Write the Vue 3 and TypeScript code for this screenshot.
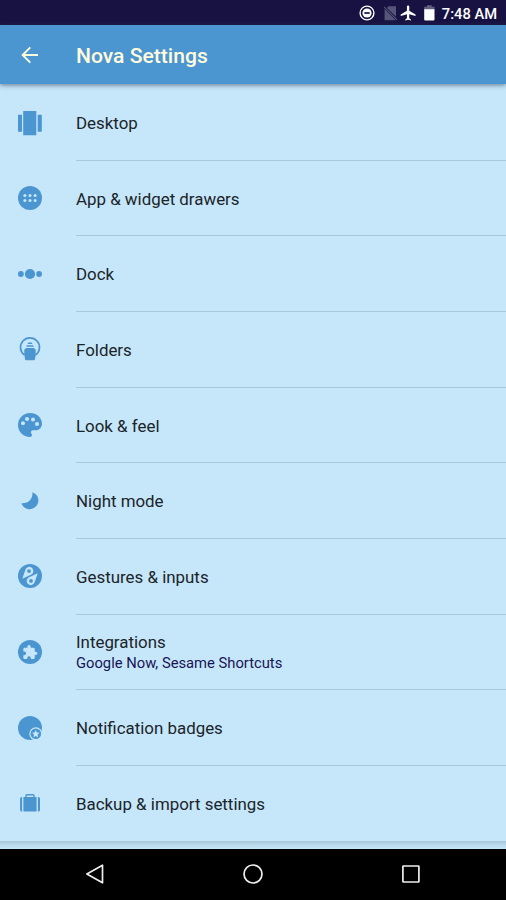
<script setup lang="ts">
type IconName =
  | 'desktop' | 'drawer' | 'dock' | 'folder' | 'palette'
  | 'moon' | 'gesture' | 'puzzle' | 'badge' | 'backup'

interface SettingItem {
  icon: IconName
  title: string
  summary?: string
}

const items: SettingItem[] = [
  { icon: 'desktop', title: 'Desktop' },
  { icon: 'drawer', title: 'App & widget drawers' },
  { icon: 'dock', title: 'Dock' },
  { icon: 'folder', title: 'Folders' },
  { icon: 'palette', title: 'Look & feel' },
  { icon: 'moon', title: 'Night mode' },
  { icon: 'gesture', title: 'Gestures & inputs' },
  { icon: 'puzzle', title: 'Integrations', summary: 'Google Now, Sesame Shortcuts' },
  { icon: 'badge', title: 'Notification badges' },
  { icon: 'backup', title: 'Backup & import settings' },
]
</script>

<template>
  <div class="screen">
    <div class="status">
      <svg class="status-icons" viewBox="0 0 80 26">
        <circle cx="8" cy="13" r="6.900" fill="none" stroke="#fff" stroke-width="1.400" />
        <circle cx="8" cy="13" r="4.600" fill="#fff" />
        <path d="M5.300 13H10.700" stroke="#181243" stroke-width="1.700" />
        <path d="M37 6.300V16.800L28 7.900L29.600 6.300ZM25.600 9L36.800 20.200H25.600Z" fill="#57547a" />
        <path d="M25 6.800L38 19.800" stroke="#57547a" stroke-width="1.100" />
        <path transform="translate(40.200 3.900) scale(.76)" fill="#fff" d="M21.500 16v-2l-8.300-5V3.500a1.500 1.500 0 0 0-3 0V9L2 14v2l8.200-2.500V19L8 20.500V22l3.700-1 3.700 1v-1.500L13.200 19v-5.500Z" />
        <path d="M65.200 6.800H68V5.300H72.700V6.800H75.500V10H65.200Z" fill="#625f81" />
        <path d="M65.200 9.200H75.500V19.600Q75.500 20.500 74.600 20.500H66.100Q65.200 20.500 65.200 19.600Z" fill="#fff" />
      </svg>
      <span class="clock">7:48 AM</span>
    </div>

    <header class="bar">
      <svg class="back" viewBox="0 0 18 18">
        <path d="M17 9H2M9.300 1.300L1.600 9L9.300 16.700" fill="none" stroke="#fffbdc" stroke-width="1.900" />
      </svg>
      <h1 class="heading">Nova Settings</h1>
    </header>

    <main class="list">
      <div v-for="item in items" :key="item.icon" class="row">
        <svg class="icon" viewBox="0 0 24 24">
          <g v-if="item.icon === 'desktop'">
            <path d="M5.200 0H18.300V24.300H5.200ZM0 3.800H4V20.700H0ZM19.700 3.800H23.800V20.700H19.700Z" />
          </g>
          <g v-else-if="item.icon === 'drawer'">
            <circle cx="12" cy="12" r="12" />
            <g class="cut">
              <circle cx="6.900" cy="9.400" r="1.500" /><circle cx="12" cy="9.400" r="1.500" /><circle cx="17.100" cy="9.400" r="1.500" />
              <circle cx="6.900" cy="14.600" r="1.500" /><circle cx="12" cy="14.600" r="1.500" /><circle cx="17.100" cy="14.600" r="1.500" />
            </g>
          </g>
          <g v-else-if="item.icon === 'dock'">
            <circle cx="2.900" cy="12" r="2.900" /><circle cx="12" cy="12" r="5.100" /><circle cx="21.100" cy="12" r="2.900" />
          </g>
          <g v-else-if="item.icon === 'folder'">
            <path class="ring" d="M6.500 18.100A9.500 9.500 0 1 1 17.500 18.100" />
            <path d="M10.300 5.500H13.700L14.500 6.900H9.500ZM8.900 8.300H15.100L15.900 9.800H8.100ZM7.700 11H16.300L16.700 12.200H17.700V17.500L17 22.300Q16.800 23.300 15.800 23.300H8.200Q7.200 23.300 7 22.300L6.300 17.500V12.200H7.300Z" />
          </g>
          <g v-else-if="item.icon === 'palette'">
            <path transform="translate(-4 -4) scale(1.333)" d="M12 3c-4.970 0-9 4.030-9 9s4.030 9 9 9c.83 0 1.500-.67 1.500-1.500 0-.39-.15-.74-.39-1.010-.23-.26-.38-.61-.38-.99 0-.83.67-1.500 1.500-1.500H16c2.760 0 5-2.240 5-5 0-4.420-4.030-8-9-8Z" />
            <g class="cut">
              <circle cx="5" cy="10.200" r="2" /><circle cx="9" cy="6" r="2" /><circle cx="15" cy="6.400" r="2" /><circle cx="19" cy="10.900" r="2" />
            </g>
          </g>
          <g v-else-if="item.icon === 'moon'">
            <path d="M14.300 3.200A8.700 8.700 0 1 1 3.400 14.200A9.600 9.600 0 0 0 14.300 3.200Z" />
          </g>
          <g v-else-if="item.icon === 'gesture'">
            <circle cx="12" cy="12" r="12" />
            <g class="cut">
              <path fill-rule="evenodd" d="M4.300 14.700L7.300 6A4.100 4.100 0 1 1 13.400 10.500ZM11 5.200A1.900 1.900 0 1 0 11 9A1.900 1.900 0 1 0 11 5.200Z" />
              <path fill-rule="evenodd" d="M19.700 9.300L16.700 18A4.100 4.100 0 1 1 10.600 13.500ZM13 15A1.900 1.900 0 1 0 13 18.800A1.900 1.900 0 1 0 13 15Z" />
            </g>
          </g>
          <g v-else-if="item.icon === 'puzzle'">
            <circle cx="12" cy="12" r="12" />
            <path class="cut" transform="translate(4 4.300) scale(.67)" d="M20.500 11H19V7c0-1.100-.9-2-2-2h-4V3.500a2.500 2.500 0 0 0-5 0V5H4c-1.100 0-2 .9-2 2v3.800h1.500a2.700 2.700 0 0 1 0 5.400H2V20c0 1.100.9 2 2 2h3.800v-1.500a2.700 2.700 0 0 1 5.400 0V22H17c1.100 0 2-.9 2-2v-4h1.500a2.500 2.500 0 0 0 0-5Z" />
          </g>
          <g v-else-if="item.icon === 'badge'">
            <circle cx="12" cy="12" r="12" />
            <circle class="cut" cx="17.800" cy="17.800" r="6.500" />
            <circle cx="17.800" cy="17.800" r="5.300" />
            <path class="cut" d="M17.800 14.100L18.900 16.500L21.500 16.800L19.600 18.600L20.100 21.200L17.800 19.900L15.500 21.200L16 18.600L14.100 16.800L16.700 16.500Z" />
          </g>
          <g v-else>
            <path fill-rule="evenodd" d="M5.400 6H7.300V4.700Q7.300 3.100 8.900 3.100H15.100Q16.700 3.100 16.700 4.700V6H18.600V20.500H5.400ZM8.700 6H15.300V4.500H8.700Z" />
            <path d="M4.100 6V20.500H3.600Q2.100 20.500 2.100 18.900V7.600Q2.100 6 3.600 6ZM19.900 6H20.500Q22 6 22 7.600V18.900Q22 20.500 20.500 20.500H19.900Z" />
          </g>
        </svg>
        <div class="label">
          <span class="title">{{ item.title }}</span>
          <span v-if="item.summary" class="summary">{{ item.summary }}</span>
        </div>
      </div>
    </main>
    <div class="edge"></div>

    <nav class="nav">
      <svg viewBox="0 0 22 22"><path d="M2.900 11L18.500 2.200V19.800Z" /></svg>
      <svg viewBox="0 0 22 22"><circle cx="11" cy="11" r="9" /></svg>
      <svg viewBox="0 0 22 22"><rect x="2.900" y="3" width="16" height="16" rx=".5" /></svg>
    </nav>
  </div>
</template>

<style>
body {
  margin: 0;
}
</style>

<style scoped>
.screen {
  width: 506px;
  height: 900px;
  display: flex;
  flex-direction: column;
  overflow: hidden;
  background: #c6e7fa;
  font-family: Roboto, "Liberation Sans", sans-serif;
}
.status {
  height: 25px;
  flex: none;
  display: flex;
  align-items: center;
  justify-content: flex-end;
  padding-right: 9px;
  background: #181243;
  color: #fff;
}
.status-icons {
  width: 80px;
  height: 26px;
  margin-right: 3px;
  flex: none;
}
.clock {
  font-size: 14.700px;
  font-weight: 500;
  line-height: 26px;
  white-space: nowrap;
  padding-top: 2px;
}
.bar {
  height: 59px;
  flex: none;
  display: flex;
  align-items: center;
  padding: 1px 0 0 21px;
  box-sizing: border-box;
  background: #4b96d1;
  box-shadow: 0 1px 5px rgba(40, 60, 80, 0.65);
}
.back {
  width: 18px;
  height: 18px;
  margin-right: 37px;
}
.heading {
  margin: 0;
  padding-top: 2px;
  font-size: 21.100px;
  font-weight: 500;
  line-height: 30px;
  color: #fffbdc;
}
.list {
  height: 757px;
  flex: none;
  box-sizing: border-box;
  padding-top: 1.200px;
  display: grid;
  grid-template-rows: repeat(10, 75.650px);
}
.row {
  display: flex;
  align-items: center;
  padding-left: 17.700px;
}
.icon {
  width: 24px;
  height: 24px;
  flex: none;
  margin: 0 34.300px 1px 0;
  overflow: visible;
  fill: #4b96d1;
}
.ring {
  fill: none;
  stroke: #4b96d1;
  stroke-width: 1.700;
}
.cut {
  fill: #c6e7fa;
}
.label {
  align-self: stretch;
  flex: 1;
  display: flex;
  flex-direction: column;
  justify-content: center;
  padding-top: 1px;
  border-bottom: 1px solid #a9c8dc;
}
.row:last-child .label {
  border-bottom-color: transparent;
}
.title {
  font-size: 16.900px;
  line-height: 22px;
  color: #1b2429;
}
.summary {
  font-size: 14.750px;
  line-height: 20px;
  color: #181456;
}
.edge {
  height: 8px;
  flex: none;
  background: linear-gradient(#a9c6d9, #bddbed 55%, #c3e4f7);
}
.nav {
  height: 51px;
  flex: none;
  box-sizing: border-box;
  padding-bottom: 1px;
  display: flex;
  align-items: center;
  justify-content: center;
  gap: 136px;
  background: #000;
}
.nav svg {
  width: 22px;
  height: 22px;
  fill: none;
  stroke: #eee;
  stroke-width: 1.700;
  stroke-linejoin: round;
}
</style>
